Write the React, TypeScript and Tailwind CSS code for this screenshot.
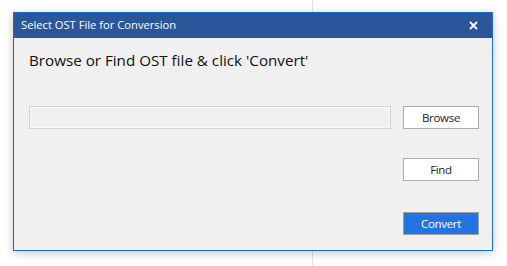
import React from "react";

const font = { fontFamily: '"Segoe UI", "Open Sans", "Noto Sans", sans-serif' };

const DialogButton: React.FC<{ label: string; primary?: boolean; className?: string }> = ({
  label,
  primary,
  className = "",
}) => (
  <button
    className={`h-[23px] w-[76px] border text-[11.5px] leading-none tracking-[-0.3px] ${
      primary
        ? "border-[#a0a0a0] bg-[#2374e1] text-white"
        : "border-[#adadad] bg-white text-[#222]"
    } ${className}`}
  >
    {label}
  </button>
);

export default function App() {
  return (
    <div className="relative h-[266px] w-[507px] overflow-hidden bg-white pl-[13px] pt-[12px]" style={font}>
      <div className="absolute left-[312px] top-0 h-full w-px bg-[#e3e3e3]" />

      <div className="relative flex h-[239px] w-[480px] flex-col border border-[#1b6bd6] bg-[#f0f0f0] shadow-[0_2px_9px_rgba(0,0,0,0.22)]">
        <div className="flex h-[25px] items-center justify-between bg-[#2b579a] pl-[7px] pr-[14px] text-white">
          <span className="text-[11.2px]">Select OST File for Conversion</span>
          <svg width="9" height="9" viewBox="0 0 9 9">
            <path d="M1 1L8 8M8 1L1 8" stroke="white" strokeWidth="1.8" />
          </svg>
        </div>

        <div className="flex flex-1 flex-col pl-[15px] pr-[13px]">
          <h1 className="mt-[11px] text-[15.2px] text-[#111]">Browse or Find OST file &amp; click 'Convert'</h1>

          <div className="mt-[34px] flex items-center gap-[12px]">
            <div className="h-[23px] flex-1 border border-[#d4d4d4] bg-[#f0f0f0] shadow-[inset_0_0_0_1px_#fafafa]" />
            <DialogButton label="Browse" />
          </div>

          <div className="mt-[29px] flex justify-end">
            <DialogButton label="Find" />
          </div>

          <div className="mt-[31px] flex justify-end">
            <DialogButton label="Convert" primary />
          </div>
        </div>
      </div>
    </div>
  );
}
